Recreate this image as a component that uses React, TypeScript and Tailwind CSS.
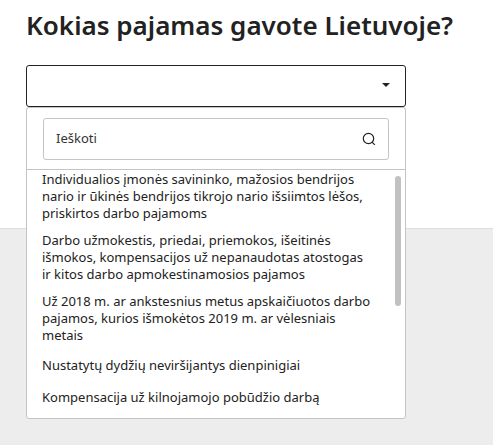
import { useState } from "react";

const OPTIONS = [
  "Individualios įmonės savininko, mažosios bendrijos nario ir ūkinės bendrijos tikrojo nario išsiimtos lėšos, priskirtos darbo pajamoms",
  "Darbo užmokestis, priedai, priemokos, išeitinės išmokos, kompensacijos už nepanaudotas atostogas ir kitos darbo apmokestinamosios pajamos",
  "Už 2018 m. ar ankstesnius metus apskaičiuotos darbo pajamos, kurios išmokėtos 2019 m. ar vėlesniais metais",
  "Nustatytų dydžių neviršijantys dienpinigiai",
  "Kompensacija už kilnojamojo pobūdžio darbą",
];

function SearchIcon() {
  return (
    <svg className="size-[14px] shrink-0" viewBox="0 0 14 14" fill="none" stroke="#222" strokeWidth="1.2" aria-hidden="true">
      <circle cx="6.5" cy="6.5" r="5.2" />
      <path d="M9.8 9.8l3 3" />
    </svg>
  );
}

function IncomeSelect() {
  const [value, setValue] = useState("");
  const [query, setQuery] = useState("");
  const visible = OPTIONS.filter((o) => o.toLowerCase().includes(query.toLowerCase()));

  return (
    <div className="relative max-w-[380px]">
      <select
        id="income"
        value={value}
        onChange={(e) => setValue(e.target.value)}
        className="block h-[42px] w-full appearance-none rounded-[3px] border border-[#222] bg-white pr-8 pl-3 text-[13px] outline-none"
      >
        <option value="" />
        {OPTIONS.map((o) => (
          <option key={o}>{o}</option>
        ))}
      </select>
      <svg className="pointer-events-none absolute top-[18px] right-4 h-1 w-2" viewBox="0 0 8 4" aria-hidden="true">
        <path d="M0 0h8L4 4z" fill="#222" />
      </svg>

      {/* open menu, hangs over the grey area below the form */}
      <div className="absolute inset-x-0 top-full rounded-[3px] border border-[#c4c4c4] bg-white">
        <div className="border-b border-[#c4c4c4] px-4 pt-[10px] pb-[9px]">
          <label className="flex h-[42px] items-center rounded-[3px] border border-[#c4c4c4] px-3">
            <input
              type="text"
              aria-label="Ieškoti"
              placeholder="Ieškoti"
              value={query}
              onChange={(e) => setQuery(e.target.value)}
              className="min-w-0 flex-1 text-[13px] outline-none placeholder:text-[#333]"
            />
            <SearchIcon />
          </label>
        </div>
        <div className="relative pt-px pb-[5px]">
          <ul className="pr-8 pl-[15px]">
            {visible.map((o) => (
              <li key={o} className="group">
                <button
                  type="button"
                  onClick={() => setValue(o)}
                  className="flex min-h-8 w-full items-center py-[5px] text-left text-[13px] leading-[17px] group-first:pt-0"
                >
                  {o}
                </button>
              </li>
            ))}
          </ul>
          <div className="absolute top-[6px] right-1 h-[130px] w-[6px] rounded-full bg-[#c1c1c1]" />
        </div>
      </div>
    </div>
  );
}

export default function App() {
  return (
    <div className="min-h-screen bg-[#ededed] font-['Noto_Sans',sans-serif] text-[#222]">
      <main className="border-b border-[#ddd] bg-white px-[26px] pt-[7px] pb-[121px]">
        <label htmlFor="income" className="mb-[22px] block text-[26px] leading-9 font-semibold">
          Kokias pajamas gavote Lietuvoje?
        </label>
        <IncomeSelect />
      </main>
    </div>
  );
}
